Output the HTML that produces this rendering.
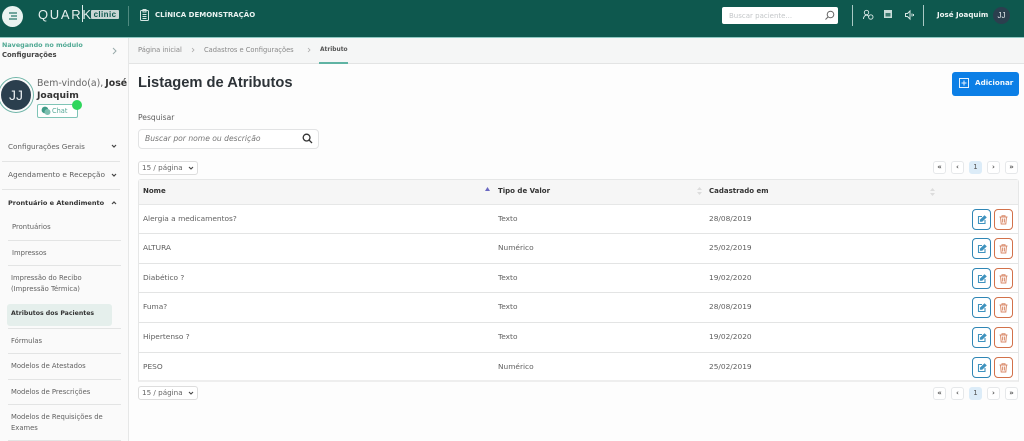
<!DOCTYPE html>
<html lang="pt"><head><meta charset="utf-8"><title>Atributos</title>
<style>
*{box-sizing:border-box}
html,body{margin:0;padding:0}
body{width:1024px;height:441px;overflow:hidden;position:relative;background:#fdfdfd;font-family:"DejaVu Sans","Liberation Sans",sans-serif;color:#555}
.t{position:absolute;white-space:nowrap;line-height:12px;font-size:7.4px;color:#5f5f5f}
.b{font-weight:bold;color:#333}
.a{position:absolute}
.hr{position:absolute;height:1px;background:#e3e4e4}
.btn{position:absolute;width:19px;height:21px;border-radius:4px;border:1.5px solid;background:#fff}
.pg{position:absolute;width:13px;height:13px;border:1px solid #e6e8ea;border-radius:3px;background:#fff;font-size:7px;line-height:11px;text-align:center;color:#555;font-weight:bold}
.sel{position:absolute;left:138px;width:60px;height:14px;border:1px solid #ddd;border-radius:3px;background:#fff;font-size:7.2px;line-height:12px;padding-left:3px;color:#666}
svg{position:absolute;display:block;overflow:visible}
</style></head><body>

<!-- header -->
<div class="a" style="left:0;top:0;width:1024px;height:38px;background:#0e584e;border-bottom:1px solid #8fc9c2"></div>
<div class="a" style="left:2px;top:5.5px;width:21px;height:21px;border-radius:50%;background:#e9f3f1"></div>
<svg style="left:8px;top:12px" width="10" height="8" fill="none" stroke="#2a7a6c" stroke-width="1.2"><path d="M1 1H9M3 4H9M1 7H9"/></svg>
<div class="t" style="left:38px;top:7px;font-size:13px;line-height:16px;color:#e4efed;letter-spacing:1.7px;font-family:'Liberation Sans',sans-serif">QUARK</div>
<div class="a" style="left:82px;top:5px;width:1px;height:17px;background:#dfeeeb"></div>
<div class="a" style="left:91px;top:10px;width:28px;height:9px;background:#c9d6d4;border-radius:1px;font:bold 8px/9px 'Liberation Sans',sans-serif;color:#0e584e;text-align:center;letter-spacing:.4px">clinic</div>
<div class="a" style="left:128px;top:6px;width:1px;height:20px;background:#4f8a80"></div>
<svg style="left:140px;top:9px" width="10" height="12" fill="none" stroke="#d5e6e3" stroke-width="1"><rect x=".5" y="1.5" width="8" height="10" rx="1"/><path d="M3 .5H6V3H3ZM2.5 5.5H6.5M2.5 7.5H6.5M2.5 9.5H6.5"/></svg>
<div class="t b" style="left:155px;top:9px;font-size:7px;color:#e8f2f0">CLÍNICA DEMONSTRAÇÃO</div>

<div class="a" style="left:722px;top:7px;width:116px;height:17px;background:#fff;border-radius:2px"></div>
<div class="t" style="left:729px;top:10px;color:#c3c6c8;font-size:7px">Buscar paciente...</div>
<svg style="left:824px;top:10px" width="11" height="11" fill="none" stroke="#666" stroke-width="1"><circle cx="6.5" cy="4.5" r="3.3"/><path d="M4 7L1.5 9.5"/></svg>
<div class="a" style="left:852px;top:5px;width:1px;height:21px;background:#a9c9c4"></div>
<div class="a" style="left:923px;top:5px;width:1px;height:21px;background:#a9c9c4"></div>
<svg style="left:863px;top:10px" width="11" height="10" fill="none" stroke="#dcebe8" stroke-width=".9"><circle cx="3.5" cy="2.5" r="2.2"/><path d="M.5 9C.5 6.5 2 5.2 3.5 5.2S5.5 6 5.8 7"/><circle cx="7.8" cy="7" r="2.2"/></svg>
<svg style="left:884px;top:10px" width="9" height="9"><rect width="8" height="8" fill="#c9dcd9"/><rect x="1.5" y="3" width="5" height="3.5" fill="#3d7a70"/></svg>
<svg style="left:905px;top:10px" width="10" height="10" fill="none" stroke="#d5e6e3" stroke-width="1"><path d="M.5 3.5H2.5L5 1V9L2.5 6.5H.5Z"/><path d="M7 3.5V6.5M8.5 4V6"/></svg>
<div class="t b" style="left:937px;top:9px;font-size:7.1px;color:#f0f5f4">José Joaquim</div>
<div class="a" style="left:993px;top:7px;width:17px;height:17px;border-radius:50%;background:#2b3f4e;color:#dfe5e8;font:8px/17px 'Liberation Sans',sans-serif;text-align:center">JJ</div>

<!-- sidebar -->
<div class="a" style="left:0;top:38px;width:129px;height:403px;background:#fafafa;border-right:1px solid #e6e7e7"></div>
<div class="t b" style="left:2px;top:39px;font-size:6.4px;color:#4fa893">Navegando no módulo</div>
<div class="t b" style="left:2px;top:49px;font-size:6.8px;color:#444">Configurações</div>
<svg style="left:112px;top:47px" width="5" height="8" fill="none" stroke="#9aa" stroke-width="1"><path d="M1 1L4 4L1 7"/></svg>
<div class="a" style="left:-1px;top:78px;width:34px;height:34px;border-radius:50%;background:#2b3f4e;border:2px solid #fafafa;box-shadow:0 0 0 1px #6fb5a8;color:#e6ebee;font:14px/30px 'Liberation Sans',sans-serif;text-align:center">JJ</div>
<div class="t" style="left:37px;top:77px;font-size:9.4px;line-height:13px;color:#666">Bem-vindo(a), <b style="color:#333;margin-left:-1px">José</b></div>
<div class="t b" style="left:37px;top:89px;font-size:9.2px;line-height:13px;color:#333">Joaquim</div>
<div class="a" style="left:37px;top:104px;width:41px;height:14px;border:1px solid #7fc4b6;border-radius:2px;background:#fff"></div>
<svg style="left:41px;top:106px" width="10" height="10"><circle cx="4" cy="4" r="3.4" fill="#3f9a86"/><circle cx="6.5" cy="6" r="3" fill="#7cbfb0"/></svg>
<div class="t" style="left:52px;top:105px;font-size:6.6px;color:#55a897">Chat</div>
<div class="a" style="left:72px;top:100px;width:10px;height:10px;border-radius:50%;background:#2fd65c"></div>

<div class="t" style="left:8px;top:141px;font-size:7.2px">Configurações Gerais</div>
<svg class="c" style="left:111px;top:144px" width="6" height="5" fill="none" stroke="#444" stroke-width="1.2"><path d="M1 1L3 3L5 1"/></svg>
<div class="hr" style="left:2px;top:161px;width:118px"></div>
<div class="t" style="left:8px;top:169px;font-size:7.4px">Agendamento e Recepção</div>
<svg style="left:111px;top:173px" width="6" height="5" fill="none" stroke="#444" stroke-width="1.2"><path d="M1 1L3 3L5 1"/></svg>
<div class="hr" style="left:2px;top:189px;width:118px"></div>
<div class="t b" style="left:8px;top:197px;font-size:6.55px">Prontuário e Atendimento</div>
<svg style="left:111px;top:201px" width="6" height="5" fill="none" stroke="#444" stroke-width="1.2"><path d="M1 3L3 1L5 3"/></svg>

<div class="t" style="left:12px;top:221px;font-size:6.8px">Prontuários</div>
<div class="hr" style="left:8px;top:240px;width:113px"></div>
<div class="t" style="left:12px;top:247px;font-size:6.8px">Impressos</div>
<div class="hr" style="left:8px;top:265px;width:113px"></div>
<div class="t" style="left:11px;top:272px;font-size:6.8px">Impressão do Recibo</div>
<div class="t" style="left:11px;top:283px;font-size:6.8px">(Impressão Térmica)</div>
<div class="a" style="left:7px;top:304px;width:105px;height:22px;background:#e5efec;border-radius:3px"></div>
<div class="t b" style="left:11px;top:308px;font-size:6.2px">Atributos dos Pacientes</div>
<div class="hr" style="left:8px;top:328px;width:113px"></div>
<div class="t" style="left:11px;top:335px;font-size:6.8px">Fórmulas</div>
<div class="hr" style="left:8px;top:353px;width:113px"></div>
<div class="t" style="left:11px;top:360px;font-size:6.8px">Modelos de Atestados</div>
<div class="hr" style="left:8px;top:379px;width:113px"></div>
<div class="t" style="left:11px;top:386px;font-size:6.8px">Modelos de Prescrições</div>
<div class="hr" style="left:8px;top:404px;width:113px"></div>
<div class="t" style="left:11px;top:411px;font-size:6.8px">Modelos de Requisições de</div>
<div class="t" style="left:11px;top:422px;font-size:6.8px">Exames</div>
<div class="hr" style="left:8px;top:440px;width:113px"></div>

<!-- breadcrumb -->
<div class="a" style="left:129px;top:38px;width:895px;height:26px;background:#f5f6f6;border-bottom:1px solid #e3e4e4"></div>
<div class="t" style="left:138px;top:44px;font-size:6.7px;color:#888">Página inicial</div>
<svg style="left:191px;top:47px" width="4" height="6" fill="none" stroke="#aaa" stroke-width=".8"><path d="M1 1L3 3L1 5"/></svg>
<div class="t" style="left:204px;top:44px;font-size:6.7px;color:#888">Cadastros e Configurações</div>
<svg style="left:307px;top:47px" width="4" height="6" fill="none" stroke="#aaa" stroke-width=".8"><path d="M1 1L3 3L1 5"/></svg>
<div class="t b" style="left:320px;top:44px;font-size:5.9px;color:#555">Atributo</div>
<div class="a" style="left:319px;top:62px;width:29px;height:2px;background:#5fb3a3"></div>

<!-- title -->
<div class="t b" style="left:138px;top:74px;font:bold 14.7px/18px 'Liberation Sans',sans-serif;color:#2d3338">Listagem de Atributos</div>
<div class="a" style="left:952px;top:72px;width:67px;height:24px;background:#0c7fe6;border-radius:3px"></div>
<svg style="left:959px;top:78px" width="11" height="11" fill="none" stroke="#e6f2fd" stroke-width="1"><rect x=".5" y=".5" width="9" height="9"/><path d="M5 2.5V7.5M2.5 5H7.5"/></svg>
<div class="t b" style="left:975px;top:77px;font-size:7.2px;color:#f2f8fe">Adicionar</div>

<div class="t" style="left:138px;top:112px;font-size:7.6px">Pesquisar</div>
<div class="a" style="left:138px;top:129px;width:181px;height:20px;border:1px solid #e2e3e4;border-radius:4px;background:#fff"></div>
<div class="t" style="left:145px;top:133px;font-size:7.6px;font-style:italic;color:#777">Buscar por nome ou descrição</div>
<svg style="left:302px;top:133px" width="11" height="11" fill="none" stroke="#333" stroke-width="1.3"><circle cx="4.6" cy="4.6" r="3.4"/><path d="M7.2 7.2L10 10"/></svg>

<div class="sel" style="top:161px">15 / página</div>
<svg style="left:188px;top:166px" width="6" height="5" fill="none" stroke="#444" stroke-width="1.1"><path d="M1 1L3 3L5 1"/></svg>

<!-- pagination top -->
<div class="pg" style="left:933px;top:161px">«</div>
<div class="pg" style="left:951px;top:161px">‹</div>
<div class="pg" style="left:969px;top:161px;background:#dcecf8;border-color:#dcecf8;font-weight:normal">1</div>
<div class="pg" style="left:987px;top:161px">›</div>
<div class="pg" style="left:1005px;top:161px">»</div>

<!-- table -->
<div class="a" style="left:138px;top:179px;width:881px;height:203px;background:#fff;border:1px solid #e6e7e7;border-bottom:2px solid #eee;border-radius:3px 3px 0 0"></div>
<div class="a" style="left:139px;top:180px;width:879px;height:25px;background:#f6f6f6;border-bottom:1px solid #e6e7e7"></div>
<div class="t b" style="left:143px;top:185px;font-size:7px">Nome</div>
<div class="t b" style="left:498px;top:185px;font-size:7px">Tipo de Valor</div>
<div class="t b" style="left:709px;top:185px;font-size:7px">Cadastrado em</div>
<svg style="left:485px;top:187px" width="5" height="4"><path d="M0 4L2.5 0L5 4Z" fill="#6a68c2"/></svg>
<svg style="left:697px;top:187px" width="5" height="8" fill="#dcdcdc"><path d="M0 3L2.5 0L5 3ZM0 5H5L2.5 8Z"/></svg>
<svg style="left:930px;top:188px" width="5" height="8" fill="#dcdcdc"><path d="M0 3L2.5 0L5 3ZM0 5H5L2.5 8Z"/></svg>

<div class="hr" style="left:139px;top:233px;width:879px"></div>
<div class="hr" style="left:139px;top:263px;width:879px"></div>
<div class="hr" style="left:139px;top:292px;width:879px"></div>
<div class="hr" style="left:139px;top:322px;width:879px"></div>
<div class="hr" style="left:139px;top:352px;width:879px"></div>

<div class="t" style="left:143px;top:212.5px">Alergia a medicamentos?</div><div class="t" style="left:498px;top:212.5px">Texto</div><div class="t" style="left:709px;top:212.5px">28/08/2019</div>
<div class="t" style="left:143px;top:242px">ALTURA</div><div class="t" style="left:498px;top:242px">Numérico</div><div class="t" style="left:709px;top:242px">25/02/2019</div>
<div class="t" style="left:143px;top:271.5px">Diabético ?</div><div class="t" style="left:498px;top:271.5px">Texto</div><div class="t" style="left:709px;top:271.5px">19/02/2020</div>
<div class="t" style="left:143px;top:301px">Fuma?</div><div class="t" style="left:498px;top:301px">Texto</div><div class="t" style="left:709px;top:301px">28/08/2019</div>
<div class="t" style="left:143px;top:331px">Hipertenso ?</div><div class="t" style="left:498px;top:331px">Texto</div><div class="t" style="left:709px;top:331px">19/02/2020</div>
<div class="t" style="left:143px;top:361px">PESO</div><div class="t" style="left:498px;top:361px">Numérico</div><div class="t" style="left:709px;top:361px">25/02/2019</div>

<!-- action buttons -->
<div class="btn" style="left:972px;top:209px;border-color:#2f86b5"></div><div class="btn" style="left:994px;top:209px;border-color:#d2714a"></div>
<div class="btn" style="left:972px;top:238px;border-color:#2f86b5"></div><div class="btn" style="left:994px;top:238px;border-color:#d2714a"></div>
<div class="btn" style="left:972px;top:268px;border-color:#2f86b5"></div><div class="btn" style="left:994px;top:268px;border-color:#d2714a"></div>
<div class="btn" style="left:972px;top:297px;border-color:#2f86b5"></div><div class="btn" style="left:994px;top:297px;border-color:#d2714a"></div>
<div class="btn" style="left:972px;top:327px;border-color:#2f86b5"></div><div class="btn" style="left:994px;top:327px;border-color:#d2714a"></div>
<div class="btn" style="left:972px;top:357px;border-color:#2f86b5"></div><div class="btn" style="left:994px;top:357px;border-color:#d2714a"></div>

<svg style="left:0;top:0" width="1024" height="441" fill="none">
<defs>
<g id="e" stroke="#3f93bf" stroke-width="1.1"><path d="M5 1.5H1.5V8.5H8V5"/><path d="M3.5 6.2V4.8L7.5 1L9 2.4L5 6.2Z" fill="#3f93bf"/></g>
<g id="d" stroke="#d98a6a" stroke-width="1"><path d="M.5 2H8.5M3 2V.7H6V2M1.5 2L2.2 9H6.8L7.5 2M3.6 3.5V7.5M5.4 3.5V7.5"/></g>
</defs>
<use href="#e" x="977" y="215"/><use href="#d" x="999" y="215"/>
<use href="#e" x="977" y="244"/><use href="#d" x="999" y="244"/>
<use href="#e" x="977" y="274"/><use href="#d" x="999" y="274"/>
<use href="#e" x="977" y="303"/><use href="#d" x="999" y="303"/>
<use href="#e" x="977" y="333"/><use href="#d" x="999" y="333"/>
<use href="#e" x="977" y="363"/><use href="#d" x="999" y="363"/>
</svg>

<div class="sel" style="top:386px">15 / página</div>
<svg style="left:188px;top:391px" width="6" height="5" fill="none" stroke="#444" stroke-width="1.1"><path d="M1 1L3 3L5 1"/></svg>
<div class="pg" style="left:933px;top:387px">«</div>
<div class="pg" style="left:951px;top:387px">‹</div>
<div class="pg" style="left:969px;top:387px;background:#dcecf8;border-color:#dcecf8;font-weight:normal">1</div>
<div class="pg" style="left:987px;top:387px">›</div>
<div class="pg" style="left:1005px;top:387px">»</div>

</body></html>
